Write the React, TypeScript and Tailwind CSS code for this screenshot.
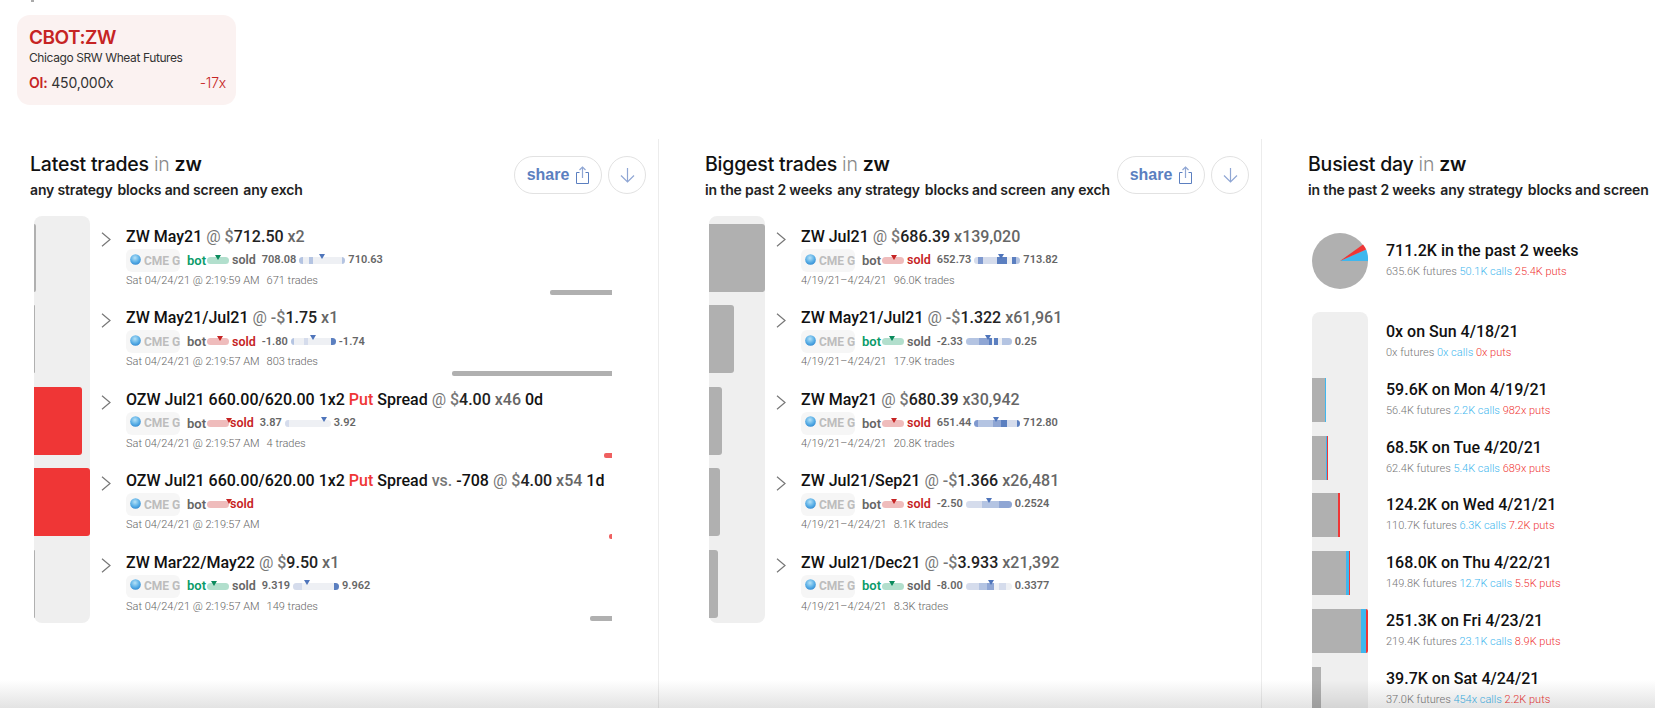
const INTER = "font-['Inter','Noto_Sans',sans-serif]";

type Seg = [number, number, string];
type Trade = {
  bar: number;
  barColor: string;
  name: React.ReactNode;
  price: React.ReactNode;
  size: string;
  extra?: string;
  side: "bot" | "sold";
  pill: number;
  tight?: boolean;
  low?: string;
  high?: string;
  rangeW?: number;
  tri?: number;
  segs?: Seg[];
  date: string;
  trades?: string;
  tail?: { w: number; color: string };
};

const L = "#d5dcec";
const M = "#b4c4e2";
const N = "#8fa6d4";
const D = "#5b7fc0";
const TAIL_RED = "#ef6060";

const latest: Trade[] = [
  { bar: 2, barColor: "#b0b0b0", name: "ZW May21", price: <Price sign="" v="712.50" />, size: "x2", side: "bot", pill: 48, low: "708.08", high: "710.63", rangeW: 46, tri: 49, segs: [[0, 9, M], [20, 10, M], [92, 8, M]], date: "Sat 04/24/21 @ 2:19:59 AM", trades: "671 trades", tail: { w: 62, color: "#b0b0b0" } },
  { bar: 1, barColor: "#b0b0b0", name: "ZW May21/Jul21", price: <Price sign="-" v="1.75" />, size: "x1", side: "sold", pill: 58, low: "-1.80", high: "-1.74", rangeW: 45, tri: 50, segs: [[0, 8, M], [30, 9, L], [90, 10, D]], date: "Sat 04/24/21 @ 2:19:57 AM", trades: "803 trades", tail: { w: 160, color: "#b0b0b0" } },
  { bar: 48, barColor: "#ef3636", name: <Put />, price: <Price sign="" v="4.00" />, size: "x46", extra: "0d", side: "sold", pill: 100, tight: true, low: "3.87", high: "3.92", rangeW: 46, tri: 86, segs: [[0, 10, L]], date: "Sat 04/24/21 @ 2:19:57 AM", trades: "4 trades", tail: { w: 8, color: TAIL_RED } },
  { bar: 56, barColor: "#ef3636", name: <><Put /> <span className="text-[#777777]">vs.</span> -708</>, price: <Price sign="" v="4.00" />, size: "x54", extra: "1d", side: "sold", pill: 100, tight: true, date: "Sat 04/24/21 @ 2:19:57 AM", tail: { w: 3, color: TAIL_RED } },
  { bar: 1, barColor: "#b0b0b0", name: "ZW Mar22/May22", price: <Price sign="" v="9.50" />, size: "x1", side: "bot", pill: 32, low: "9.319", high: "9.962", rangeW: 46, tri: 31, segs: [[0, 19, L], [90, 10, D]], date: "Sat 04/24/21 @ 2:19:57 AM", trades: "149 trades", tail: { w: 22, color: "#b0b0b0" } },
];

const biggest: Trade[] = [
  { bar: 56, barColor: "#b0b0b0", name: "ZW Jul21", price: <Price sign="" v="686.39" />, size: "x139,020", side: "sold", pill: 53, low: "652.73", high: "713.82", rangeW: 46, tri: 58, segs: [[0, 7, L], [7, 12, "#7f99cf"], [19, 30, L], [49, 21, D], [82, 8, D], [90, 10, M]], date: "4/19/21–4/24/21", trades: "96.0K trades" },
  { bar: 25, barColor: "#b0b0b0", name: "ZW May21/Jul21", price: <Price sign="-" v="1.322" />, size: "x61,961", side: "bot", pill: 45, low: "-2.33", high: "0.25", rangeW: 46, tri: 49, segs: [[0, 29, M], [29, 21, N], [50, 8, D], [61, 10, D], [78, 22, M]], date: "4/19/21–4/24/21", trades: "17.9K trades" },
  { bar: 13, barColor: "#b0b0b0", name: "ZW May21", price: <Price sign="" v="680.39" />, size: "x30,942", side: "sold", pill: 53, low: "651.44", high: "712.80", rangeW: 46, tri: 47, segs: [[0, 9, "#7f99cf"], [9, 31, M], [40, 18, N], [58, 12, D], [70, 22, L], [92, 8, D]], date: "4/19/21–4/24/21", trades: "20.8K trades" },
  { bar: 11, barColor: "#b0b0b0", name: "ZW Jul21/Sep21", price: <Price sign="-" v="1.366" />, size: "x26,481", side: "sold", pill: 53, low: "-2.50", high: "0.2524", rangeW: 46, tri: 50, segs: [[0, 36, L], [36, 36, M], [72, 28, N]], date: "4/19/21–4/24/21", trades: "8.1K trades" },
  { bar: 9, barColor: "#b0b0b0", name: "ZW Jul21/Dec21", price: <Price sign="-" v="3.933" />, size: "x21,392", side: "bot", pill: 45, low: "-8.00", high: "0.3377", rangeW: 46, tri: 54, segs: [[0, 29, L], [29, 18, M], [47, 14, N], [72, 16, L]], date: "4/19/21–4/24/21", trades: "8.3K trades" },
];

const days = [
  { gray: 0, blue: 0, red: 0, total: "0x on Sun 4/18/21", f: "0x", c: "0x", p: "0x" },
  { gray: 13, blue: 1, red: 0, total: "59.6K on Mon 4/19/21", f: "56.4K", c: "2.2K", p: "982x" },
  { gray: 14, blue: 1, red: 1, total: "68.5K on Tue 4/20/21", f: "62.4K", c: "5.4K", p: "689x" },
  { gray: 26, blue: 0, red: 2, total: "124.2K on Wed 4/21/21", f: "110.7K", c: "6.3K", p: "7.2K" },
  { gray: 34, blue: 3, red: 1, total: "168.0K on Thu 4/22/21", f: "149.8K", c: "12.7K", p: "5.5K" },
  { gray: 49, blue: 5, red: 2, total: "251.3K on Fri 4/23/21", f: "219.4K", c: "23.1K", p: "8.9K" },
  { gray: 9, blue: 0, red: 0, total: "39.7K on Sat 4/24/21", f: "37.0K", c: "454x", p: "2.2K" },
];

function Price({ sign, v }: { sign: string; v: string }) {
  return (
    <>
      <span className="font-normal text-[#777777]">@ </span>
      <span className="text-[#777777]">{sign}$</span>
      <span className="text-[#222222]">{v}</span>
    </>
  );
}

function Put() {
  return (
    <>
      OZW Jul21 660.00/620.00 1x2 <span className="text-[#ef3636]">Put</span> Spread
    </>
  );
}

function Globe() {
  return (
    <svg width="11" height="11" viewBox="0 0 12 12" className="shrink-0 -mt-[3px]">
      <defs>
        <radialGradient id="globe" cx="45%" cy="35%" r="70%">
          <stop offset="0%" stopColor="#b6e2f7" />
          <stop offset="60%" stopColor="#58aee6" />
          <stop offset="100%" stopColor="#2f86cf" />
        </radialGradient>
      </defs>
      <circle cx="6" cy="6" r="5.8" fill="url(#globe)" />
    </svg>
  );
}

function Chevron() {
  return (
    <svg width="10" height="15" viewBox="0 0 10 15" fill="none" stroke="#777777" strokeWidth="1.2" className="shrink-0">
      <path d="M1 0.8 L9 7.5 L1 14.2" />
    </svg>
  );
}

function Tri({ color, w, h }: { color: string; w: number; h: number }) {
  return (
    <svg width={w} height={h} viewBox="0 0 8 5" preserveAspectRatio="none" className="block">
      <path d="M0 0H8L4 5Z" fill={color} />
    </svg>
  );
}

function TradeRow({ t, first, last }: { t: Trade; first: boolean; last: boolean }) {
  const botOn = t.side === "bot";
  return (
    <div className="flex h-[81.4px]">
      <div className={`w-14 shrink-0 bg-[#efefef] pt-2 ${first ? "rounded-t-lg" : ""} ${last ? "rounded-b-lg" : ""}`}>
        <div className="h-[68px] rounded-r-[3px]" style={{ width: t.bar, background: t.barColor }} />
      </div>
      <div className="mt-[16px] flex h-[15px] w-[36px] shrink-0 items-center pl-[11px]">
        <Chevron />
      </div>
      <div className="flex min-w-0 flex-1 flex-col whitespace-nowrap font-['Roboto',sans-serif]">
        <div className="mt-[11px] h-[20px] text-[16px] leading-[20px] font-medium text-[#111111]">
          {t.name} {t.price} <span className="text-[#666666]">{t.size}</span>
          {t.extra && <span> {t.extra}</span>}
        </div>
        <div className="mt-[2px] flex h-[23px] items-center font-semibold">
          <div className="flex h-[23px] w-[54px] items-center rounded-md bg-[#f6f6f6] pl-1 text-[12px] font-bold text-[#bdbdbd]">
            <Globe />
            <span className="ml-[3px]">CME G</span>
          </div>
          <span className={`ml-[7px] w-[20px] text-[13px] ${botOn ? "text-[#0a9b6a]" : "text-[#666666]"}`}>bot</span>
          <div className={`relative h-[7px] w-[22px] rounded-full ${botOn ? "bg-[#b2dfcd]" : "bg-[#efbcbc]"}`}>
            <div className="absolute -top-[2px] -translate-x-1/2" style={{ left: `${t.pill}%` }}>
              <Tri color={botOn ? "#0a8a5c" : "#c62424"} w={6} h={5} />
            </div>
          </div>
          <span className={`text-[12.5px] ${t.tight ? "ml-[1px]" : "ml-[3px]"} ${botOn ? "text-[#666666]" : "text-[#c62424]"}`}>sold</span>
          {t.low && (
            <>
              <span className="ml-[6px] text-[11px] text-[#666666]">{t.low}</span>
              <div className="relative mx-[3px] h-[7px] overflow-visible rounded-full bg-[#eef0f4]" style={{ width: t.rangeW }}>
                <div className="absolute inset-0 overflow-hidden rounded-full">
                  {t.segs?.map((s, i) => (
                    <div key={i} className="absolute inset-y-0" style={{ left: `${s[0]}%`, width: `${s[1]}%`, background: s[2] }} />
                  ))}
                </div>
                <div className="absolute -top-[3px] -translate-x-1/2" style={{ left: `${t.tri}%` }}>
                  <Tri color="#4f75bb" w={6} h={5} />
                </div>
              </div>
              <span className="text-[11px] text-[#666666]">{t.high}</span>
            </>
          )}
        </div>
        <div className="mt-[2px] h-[13px] text-[11px] leading-[13px] font-light text-[#666666]">
          {t.date}
          {t.trades && <span className="ml-[7px]">{t.trades}</span>}
        </div>
        {t.tail && <div className="mt-[3px] h-[5px] self-end rounded-l-[2px]" style={{ width: t.tail.w, background: t.tail.color }} />}
      </div>
    </div>
  );
}

function Header({ title, tags, buttons }: { title: string; tags: string[]; buttons: boolean }) {
  return (
    <div className="flex h-[77px] items-start justify-between">
      <div className={`whitespace-nowrap ${INTER}`}>
        <div className="mt-[12px] h-[26px] text-[19.5px] leading-[26px] font-medium tracking-[-0.2px] text-[#111111]">
          {title} <span className="font-light text-[#8a8a8a]">in</span> <span className="font-semibold">zw</span>
        </div>
        <div className="mt-[3px] flex gap-[5px] text-[14px] leading-[20px] font-semibold tracking-[-0.15px] text-[#222222]">
          {tags.map((t) => (
            <span key={t}>{t}</span>
          ))}
        </div>
      </div>
      {buttons && (
        <div className="mt-[17px] flex gap-[6px] pr-3">
          <div className="flex h-[38px] w-[88px] items-center justify-center gap-[7px] rounded-full border border-[#e2e2e2] font-['Liberation_Sans',sans-serif] text-[16px] font-bold text-[#5b7fc0]">
            share
            <svg width="13" height="18" viewBox="0 0 13 18" fill="none" stroke="#5b7fc0" strokeWidth="1">
              <path d="M3.5 6.5H0.5V17.5H12.5V6.5H9.5" />
              <path d="M6.5 12V1" stroke="#8fa6d4" strokeWidth="1.2" />
              <path d="M3.5 4L6.5 1L9.5 4" stroke="#8fa6d4" strokeWidth="1.2" />
            </svg>
          </div>
          <div className="flex h-[38px] w-[38px] items-center justify-center rounded-full border border-[#e2e2e2]">
            <svg width="15" height="16" viewBox="0 0 15 16" fill="none" stroke="#8fa6d4" strokeWidth="1.2">
              <path d="M7.5 1V15M1 8.5L7.5 15L14 8.5" />
            </svg>
          </div>
        </div>
      )}
    </div>
  );
}

function TradeList({ rows }: { rows: Trade[] }) {
  return (
    <div>
      {rows.map((t, i) => (
        <TradeRow key={i} t={t} first={i === 0} last={i === rows.length - 1} />
      ))}
    </div>
  );
}

function Pie() {
  return (
    <svg width="56" height="56" viewBox="0 0 56 56" className="shrink-0">
      <circle cx="28" cy="28" r="28" fill="#b0b0b0" />
      <path d="M28 28 L56 28 A28 28 0 0 0 54.2 16.5 Z" fill="#3fb7ee" />
      <path d="M28 28 L54.2 16.5 A28 28 0 0 0 51 11.5 Z" fill="#ef3636" />
    </svg>
  );
}

function Sub({ f, c, p }: { f: string; c: string; p: string }) {
  return (
    <div className="text-[11px] leading-[14px] font-light text-[#777777]">
      {f} futures <span className="text-[#3fb7ee]">{c} calls</span> <span className="text-[#ef3636]">{p} puts</span>
    </div>
  );
}

export default function App() {
  return (
    <div className="relative h-[708px] w-[1655px] overflow-hidden bg-white">
      <div className="ml-[31px] h-[2px] w-[3px] bg-[#aaaaaa]" />
      <div className={`ml-[17px] mt-[13px] flex h-[90px] w-[219px] flex-col rounded-[13px] bg-[#fbf2f1] pl-3 pr-[10px] pt-[10px] ${INTER}`}>
        <div className="text-[19px] leading-[26px] font-semibold tracking-[-0.5px] text-[#c62424]">CBOT:ZW</div>
        <div className="-mt-[2px] text-[12px] leading-[17px] tracking-[-0.4px] text-[#333333]">Chicago SRW Wheat Futures</div>
        <div className="mt-[7px] flex justify-between text-[14px] leading-[20px] tracking-[-0.2px] text-[#333333]">
          <span>
            <span className="font-semibold text-[#c62424]">OI:</span> 450,000x
          </span>
          <span className="font-light text-[#c62424]">-17x</span>
        </div>
      </div>

      <div className="mt-[34px] flex">
        <section className="h-[600px] w-[659px] shrink-0 border-r border-[#ececec] pl-[30px]">
          <Header title="Latest trades" tags={["any strategy", "blocks and screen", "any exch"]} buttons />
          <div className="ml-1 mr-[46px]">
            <TradeList rows={latest} />
          </div>
        </section>
        <section className="h-[600px] w-[603px] shrink-0 border-r border-[#ececec] pl-[46px]">
          <Header title="Biggest trades" tags={["in the past 2 weeks", "any strategy", "blocks and screen", "any exch"]} buttons />
          <div className="ml-1">
            <TradeList rows={biggest} />
          </div>
        </section>
        <section className="min-w-0 flex-1 overflow-hidden pl-[46px] font-['Roboto',sans-serif]">
          <Header title="Busiest day" tags={["in the past 2 weeks", "any strategy", "blocks and screen"]} buttons={false} />
          <div className="ml-1 flex h-[96px] items-start gap-[18px] pt-[17px]">
            <Pie />
            <div className="whitespace-nowrap pt-[7px]">
              <div className="text-[16px] leading-[22px] font-medium text-[#111111]">711.2K in the past 2 weeks</div>
              <div className="mt-[3px]">
                <Sub f="635.6K" c="50.1K" p="25.4K" />
              </div>
            </div>
          </div>
          <div className="ml-1">
            {days.map((d, i) => (
              <div key={i} className="flex h-[57.8px]">
                <div className={`w-14 shrink-0 bg-[#efefef] pt-2 ${i === 0 ? "rounded-t-lg" : ""}`}>
                  {d.gray > 0 && (
                    <div className="flex h-[44px] overflow-hidden rounded-r-[2px]">
                      <div className="bg-[#b0b0b0]" style={{ width: d.gray }} />
                      <div className="bg-[#3fb7ee]" style={{ width: d.blue }} />
                      <div className="bg-[#ef3636]" style={{ width: d.red }} />
                    </div>
                  )}
                </div>
                <div className="whitespace-nowrap pl-[18px] pt-[9px]">
                  <div className="text-[16px] leading-[22px] font-medium text-[#111111]">{d.total}</div>
                  <div className="mt-[3px]">
                    <Sub f={d.f} c={d.c} p={d.p} />
                  </div>
                </div>
              </div>
            ))}
          </div>
        </section>
      </div>

      <div className="pointer-events-none absolute inset-x-0 bottom-0 h-7 bg-gradient-to-b from-transparent to-black/[0.11]" />
    </div>
  );
}
